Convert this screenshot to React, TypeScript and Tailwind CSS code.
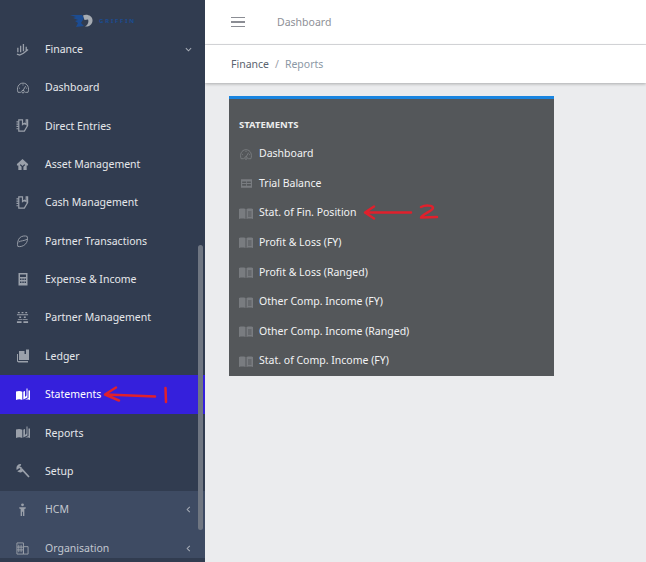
import React from 'react';

const Gauge = ({ className = '' }: { className?: string }) => (
  <svg viewBox="0 0 16 14" className={className} fill="none" stroke="currentColor" strokeWidth="1.100">
    <path d="M5.500 12.500H2.300C.5 8 2.500 2 8 2s7.500 6 5.700 10.500H10.500" />
    <path d="M8 10.500l3-5M3.500 7.500l1 .5M8 3.500v1.200M12.500 7.500l-1 .5" />
    <circle cx="8" cy="11.700" r="1.500" />
  </svg>
);

const Trend = () => (
  <svg viewBox="0 0 14 14" className="w-[13px] h-[13px]" fill="none" stroke="currentColor" strokeWidth="1.400">
    <path d="M2 5v5M5 3v7M8 1v8M11 4v4M1 12l3 1 4-2 5-4" />
  </svg>
);

const Notebook = () => (
  <svg viewBox="0 0 14 14" className="w-[13px] h-[13px]" fill="none" stroke="currentColor" strokeWidth="1.300">
    <path d="M3 1h4v5l2-1.500L11 6V1h1.500v6L9 13H3z" />
    <path d="M.5 3H3M.5 5.500H3M.5 8H3M.5 10.500H3" />
  </svg>
);

const House = () => (
  <svg viewBox="0 0 14 14" className="w-[13px] h-[13px]" fill="currentColor">
    <path d="M7 1l6 5.500V8h-1.500v5H8V9.500l2-2-1-.7L7 8.500 5 6.800l-1 .7 2 2V13H2.500V8H1V6.500z" />
  </svg>
);

const Handshake = () => (
  <svg viewBox="0 0 14 14" className="w-[13px] h-[13px]" fill="none" stroke="currentColor" strokeWidth="1">
    <path d="M4 3c2-2 6-2.500 8-1.500.8 2.500.5 6-2 8.500-2 2-5.500 3-8 2.300C1 10 2 5 4 3zM3 7.500c2-1.500 6-1 9-3" />
  </svg>
);

const Calculator = () => (
  <svg viewBox="0 0 14 14" className="w-[14px] h-[14px]" fill="currentColor">
    <path d="M2.500 1h9v12.500h-9zM4 2.500v2.500h6V2.500zM4 6.500v1.500h1.500V6.500zM6.300 6.500v1.500h1.500V6.500zM8.500 6.500v1.500H10V6.500zM4 9.500V11h1.500V9.500zM6.300 9.500V11h1.500V9.500zM8.500 9.500V11H10V9.500z" fillRule="evenodd" />
  </svg>
);

const People = () => (
  <svg viewBox="0 0 14 14" className="w-[13px] h-[13px]" fill="currentColor">
    <path d="M2 1h2v1.500H2zM6 1h2v1.500H6zM10 1h2v1.500h-2zM1 3.500h12v1H1zM3.500 6h2v1.500h-2zM8.500 6h2v1.500h-2zM2 8.500h5v1H2zM7.500 8.500h5v1h-5zM1 11h5v2H1zM8 11h5v2H8z" />
  </svg>
);

const Ledger = () => (
  <svg viewBox="0 0 14 14" className="w-[14px] h-[14px]" fill="currentColor">
    <path d="M3 2h5.500v3H10V.5h3V11H3zM1 5h1v7h10v1.500H2.500L1 12.500z" />
  </svg>
);

const OpenBook = ({ className = 'w-[14px] h-[13px]' }: { className?: string }) => (
  <svg viewBox="0 0 14 13" className={className} fill="currentColor">
    <path d="M0 3.500c2-.8 4.500-.8 6.300.2V12C4.500 11 2 11 0 12zM7.300 3.700c.5-.3 1-.5 1.700-.7V9l1.500-1.500V.5h1v9L7.300 11.500zM12.500 2.500H14V12c-1.800-.6-3.800-.5-5.700 0l4.200-2z" />
  </svg>
);

const Wrench = () => (
  <svg viewBox="0 0 14 14" className="w-[14px] h-[14px]" fill="none" stroke="currentColor" strokeWidth="1.700">
    <path d="M5 1C2.700.6 1 2.500 1.300 4.500L3.300 3l1.700 1 0 2-2 1.200C4.500 8 6 7.500 6.500 6l6.500 7" />
  </svg>
);

const Person = () => (
  <svg viewBox="0 0 14 14" className="w-[13px] h-[13px]" fill="currentColor">
    <circle cx="7" cy="2" r="1.500" />
    <path d="M3.500 4.500h7V6L9 6.500V14H7.500V9.500h-1V14H5V6.500L3.500 6z" />
  </svg>
);

const Building = () => (
  <svg viewBox="0 0 14 14" className="w-[13px] h-[13px]" fill="none" stroke="currentColor" strokeWidth="1">
    <path d="M1 1h7v12H1zM8 5h5v8H8zM3 3v8M5.500 3v8M1 5.500h7M1 8.500h7" />
  </svg>
);

const Chevron = ({ dir }: { dir: 'down' | 'left' }) => (
  <svg viewBox="0 0 8 8" className="w-[7px] h-[7px]" fill="none" stroke="currentColor" strokeWidth="1.200">
    <path d={dir === 'down' ? 'M1 2.500l3 3 3-3' : 'M5.500 1l-3 3 3 3'} />
  </svg>
);

const Griffin = () => (
  <svg viewBox="0 0 24 14" className="w-[24px] h-[14px]">
    <path d="M0 1h12l2 3-3 5 3 3-8 1 2-4-3-2 3-1-5-2 3-1z" fill="#1c4c92" />
    <path d="M13 1.500C17-.5 23 2 22.500 7c-.4 3.500-3.500 6-7.500 5.500 3-1.500 4-5 3-7l-3.500.5z" fill="#a6abb2" />
  </svg>
);

const menu: { label: string; icon: React.ReactNode; chevron?: 'down' | 'left'; tone?: string }[] = [
  { label: 'Finance', icon: <Trend />, chevron: 'down' },
  { label: 'Dashboard', icon: <Gauge className="w-[14px] h-[13px]" /> },
  { label: 'Direct Entries', icon: <Notebook /> },
  { label: 'Asset Management', icon: <House /> },
  { label: 'Cash Management', icon: <Notebook /> },
  { label: 'Partner Transactions', icon: <Handshake /> },
  { label: 'Expense & Income', icon: <Calculator /> },
  { label: 'Partner Management', icon: <People /> },
  { label: 'Ledger', icon: <Ledger /> },
  { label: 'Statements', icon: <OpenBook />, tone: 'active' },
  { label: 'Reports', icon: <OpenBook /> },
  { label: 'Setup', icon: <Wrench /> },
  { label: 'HCM', icon: <Person />, chevron: 'left', tone: 'muted' },
  { label: 'Organisation', icon: <Building />, chevron: 'left', tone: 'muted' },
];

const statements = [
  'Stat. of Fin. Position',
  'Profit & Loss (FY)',
  'Profit & Loss (Ranged)',
  'Other Comp. Income (FY)',
  'Other Comp. Income (Ranged)',
  'Stat. of Comp. Income (FY)',
];

const SmallBook = () => (
  <svg viewBox="0 0 14 11" className="w-[14px] h-[11px] text-[#797c80]" fill="currentColor">
    <path d="M0 1c2-.6 4.500-.6 6.500 0v10C4.500 10.400 2 10.400 0 11zM7.500 1C9.500.4 12 .4 14 1v10c-2-.6-4.500-.6-6.500 0zM9 3.500v1h3.500v-1zM9 5.500v1h3.500v-1zM9 7.500v1h3.500v-1z" fillRule="evenodd" />
  </svg>
);

const Grid = () => (
  <svg viewBox="0 0 14 11" className="w-[11px] h-[9px] text-[#797c80]" fill="currentColor">
    <path d="M0 0h14v11H0zM1.500 3v2h5V3zM7.500 3v2h5V3zM1.500 6v2.500h5V6zM7.500 6v2.500h5V6z" fillRule="evenodd" />
  </svg>
);

function StatementRow({ icon, label }: { icon: React.ReactNode; label: string }) {
  return (
    <div className="flex items-center h-[29.650px] text-[10.500px] text-[#f2f3f4]">
      <span className="w-[20px] shrink-0 flex justify-center pr-[6px]">{icon}</span>
      {label}
    </div>
  );
}

export default function App() {
  return (
    <div className="relative flex w-[646px] h-[562px] overflow-hidden bg-[#ebecee] font-['Noto_Sans','Open_Sans',sans-serif]">
      <aside className="relative w-[205px] shrink-0 bg-[#313c50] flex flex-col overflow-hidden z-10">
        <div className="h-[30px] shrink-0 flex items-center pl-[70px] pt-[12px] gap-[5px]">
          <Griffin />
          <span className="text-[6px] font-bold tracking-[1.800px] text-[#1c4c92]">GRIFFIN</span>
        </div>
        {menu.map((item) => (
          <div
            key={item.label}
            className={`flex items-center h-[38.380px] shrink-0 pl-[16px] pr-[13px] text-[10.500px] ${
              item.tone === 'active'
                ? 'bg-[#3520dc] text-white'
                : item.tone === 'muted'
                  ? 'bg-[#3e4b63] text-[#c2c7cf]'
                  : 'text-[#e6e8eb]'
            }`}
          >
            <span
              className={`w-[29px] shrink-0 flex ${
                item.tone === 'active' ? 'text-white' : 'text-[#9aa0aa]'
              }`}
            >
              {item.icon}
            </span>
            <span className="flex-1 pt-[1px]">{item.label}</span>
            {item.chevron && (
              <span className="text-[#a5abb5]">
                <Chevron dir={item.chevron} />
              </span>
            )}
          </div>
        ))}
        <div className="absolute right-[2px] top-[245px] h-[285px] w-[5px] rounded-full bg-[#6f7682]" />
        <div className="absolute left-0 right-0 bottom-0 h-[4px] bg-[#313c50]" />
      </aside>

      <main className="flex-1 min-w-0 flex flex-col">
        <header className="h-[45px] shrink-0 flex items-center bg-white border-b border-[#dcdde0] pl-[26px]">
          <span className="flex flex-col gap-[3px] w-[14px]">
            <span className="h-[1.500px] bg-[#8b8d94]" />
            <span className="h-[1.500px] bg-[#8b8d94]" />
            <span className="h-[1.500px] bg-[#8b8d94]" />
          </span>
          <span className="ml-[32px] pt-[1px] text-[10.500px] text-[#8e9097]">Dashboard</span>
        </header>
        <div className="h-[38px] shrink-0 flex items-center bg-white pl-[26px] pt-[1px] text-[10.500px] shadow-[0_1px_3px_rgba(0,0,0,0.28)]">
          <span className="text-[#5b6470]">Finance</span>
          <span className="mx-[6px] text-[#9aa0a8]">/</span>
          <span className="text-[#8b98a5]">Reports</span>
        </div>
        <section className="mt-[13px] ml-[24px] w-[325px] h-[280px] bg-[#54575a] border-t-[3px] border-[#1a85e0] pl-[10px]">
          <h2 className="mt-[19px] mb-[7px] text-[9.500px] leading-[14px] font-bold text-[#eceded]">STATEMENTS</h2>
          <StatementRow icon={<Gauge className="w-[14px] h-[12px] text-[#797c80]" />} label="Dashboard" />
          <StatementRow icon={<Grid />} label="Trial Balance" />
          {statements.map((s) => (
            <StatementRow key={s} icon={<SmallBook />} label={s} />
          ))}
        </section>
      </main>

      <svg viewBox="0 0 646 562" className="absolute inset-0 w-[646px] h-[562px] z-20 pointer-events-none" fill="none" stroke="#e0202c" strokeWidth="2.500" strokeLinecap="round" strokeLinejoin="round">
        <path d="M155 396.500l-49-2M116 387.500l-11 7 14 6" />
        <path d="M165.500 388l.5 14" />
        <path d="M411 212.500l-45 0M374 206.500l-9 6 9 6" />
        <path d="M421 207c4-2 12-2 12 1s-11 6-12 9.500l16-.5" />
      </svg>
    </div>
  );
}
